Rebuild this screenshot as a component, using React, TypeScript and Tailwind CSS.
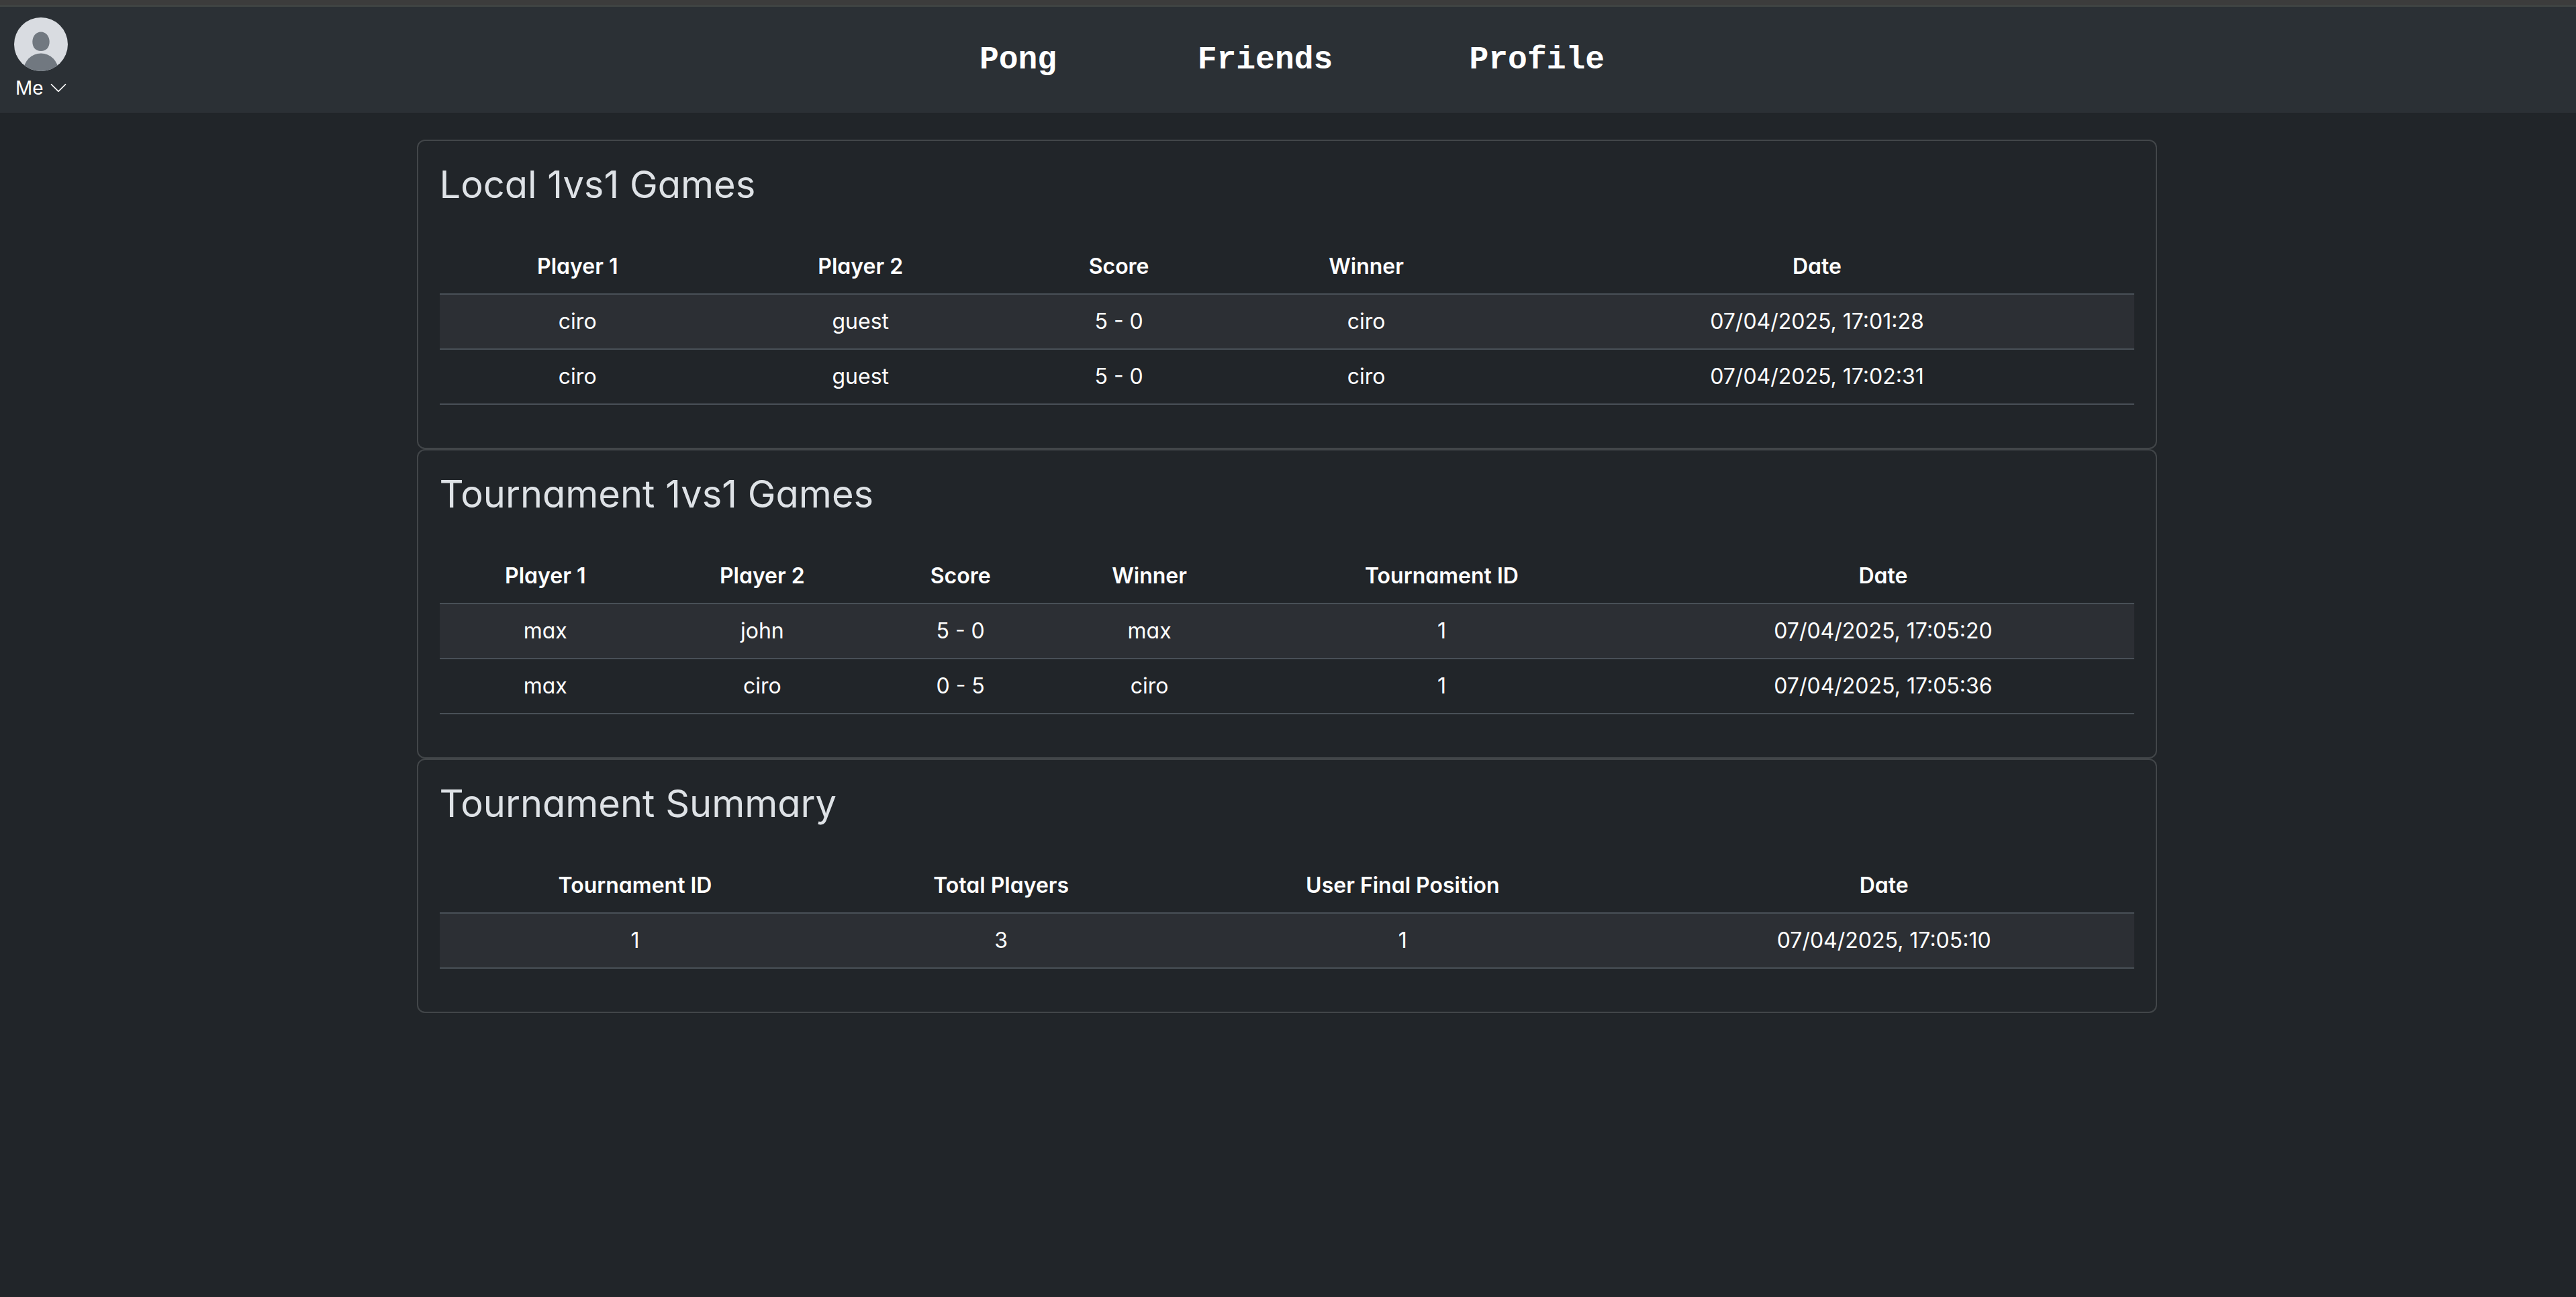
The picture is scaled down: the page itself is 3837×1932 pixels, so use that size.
import { BsChevronDown } from "react-icons/bs";

type Column = { label: string; width: string };
type Section = { title: string; columns: Column[]; rows: string[][] };

const sections: Section[] = [
  {
    title: "Local 1vs1 Games",
    columns: [
      { label: "Player 1", width: "w-[16.3%]" },
      { label: "Player 2", width: "w-[17.1%]" },
      { label: "Score", width: "w-[13.4%]" },
      { label: "Winner", width: "w-[15.8%]" },
      { label: "Date", width: "w-[37.4%]" },
    ],
    rows: [
      ["ciro", "guest", "5 - 0", "ciro", "07/04/2025, 17:01:28"],
      ["ciro", "guest", "5 - 0", "ciro", "07/04/2025, 17:02:31"],
    ],
  },
  {
    title: "Tournament 1vs1 Games",
    columns: [
      { label: "Player 1", width: "w-[12.5%]" },
      { label: "Player 2", width: "w-[13.1%]" },
      { label: "Score", width: "w-[10.3%]" },
      { label: "Winner", width: "w-[12%]" },
      { label: "Tournament ID", width: "w-[22.5%]" },
      { label: "Date", width: "w-[29.6%]" },
    ],
    rows: [
      ["max", "john", "5 - 0", "max", "1", "07/04/2025, 17:05:20"],
      ["max", "ciro", "0 - 5", "ciro", "1", "07/04/2025, 17:05:36"],
    ],
  },
  {
    title: "Tournament Summary",
    columns: [
      { label: "Tournament ID", width: "w-[23.1%]" },
      { label: "Total Players", width: "w-[20.1%]" },
      { label: "User Final Position", width: "w-[27.3%]" },
      { label: "Date", width: "w-[29.5%]" },
    ],
    rows: [["1", "3", "1", "07/04/2025, 17:05:10"]],
  },
];

function Avatar() {
  return (
    <svg viewBox="0 0 80 80" className="size-20 rounded-full" aria-hidden="true">
      <rect width="80" height="80" fill="#d9dce1" />
      <path
        d="M40 21.4c7.4 0 12.7 6.6 12.7 14.6 0 8.6-4.6 13.9-12.7 13.9S27.300 44.600 27.300 36c0-8 5.300-14.600 12.700-14.600Z"
        fill="#717880"
      />
      <ellipse cx="40" cy="80" rx="26" ry="26.5" fill="#717880" />
    </svg>
  );
}

function Header() {
  return (
    <header className="grid h-[160px] grid-cols-[1fr_auto_1fr] items-center border-t-2 border-[#424745] bg-[#2b3035] pr-1">
      <button type="button" className="flex flex-col items-start gap-1 justify-self-start pl-[21px] text-[28px] leading-[42px] text-white">
        <Avatar />
        <span className="flex items-center gap-2 pl-0.5">
          Me
          <BsChevronDown className="size-7" aria-hidden="true" />
        </span>
      </button>
      <nav className="flex gap-48 text-center font-['Liberation_Mono','DejaVu_Sans_Mono',monospace] text-5xl leading-[56px] font-bold text-white">
        <a href="#pong" className="w-32">Pong</a>
        <a href="#friends" className="w-56">Friends</a>
        <a href="#profile" className="w-48 whitespace-nowrap">Profile</a>
      </nav>
    </header>
  );
}

function GameCard({ title, columns, rows }: Section) {
  return (
    <section className="rounded-xl border-2 border-[#424649] p-8">
      <h3 className="text-[56px] leading-[67px] text-[#dee2e6]">{title}</h3>
      <table className="mt-12 mb-8 w-full table-fixed border-collapse text-center text-[32px] leading-[48px] text-white">
        <thead>
          <tr className="border-b-2 border-[#495057]">
            {columns.map((c) => (
              <th key={c.label} scope="col" className={`py-4 font-semibold ${c.width}`}>
                {c.label}
              </th>
            ))}
          </tr>
        </thead>
        <tbody>
          {rows.map((row, i) => (
            <tr key={i} className="border-b-2 border-[#495057] odd:bg-[#2c2f34]">
              {row.map((cell, j) => (
                <td key={j} className="py-4">{cell}</td>
              ))}
            </tr>
          ))}
        </tbody>
      </table>
    </section>
  );
}

export default function App() {
  return (
    <div className="min-h-screen bg-[#212529] font-['Inter','Open_Sans',sans-serif] [font-feature-settings:'cv11']">
      <div className="h-2 bg-[#3c3c3c]" />
      <Header />
      <div className="pr-1">
        <main className="mx-auto max-w-[2640px] px-6 py-10">
          {sections.map((s) => (
            <GameCard key={s.title} {...s} />
          ))}
        </main>
      </div>
    </div>
  );
}
